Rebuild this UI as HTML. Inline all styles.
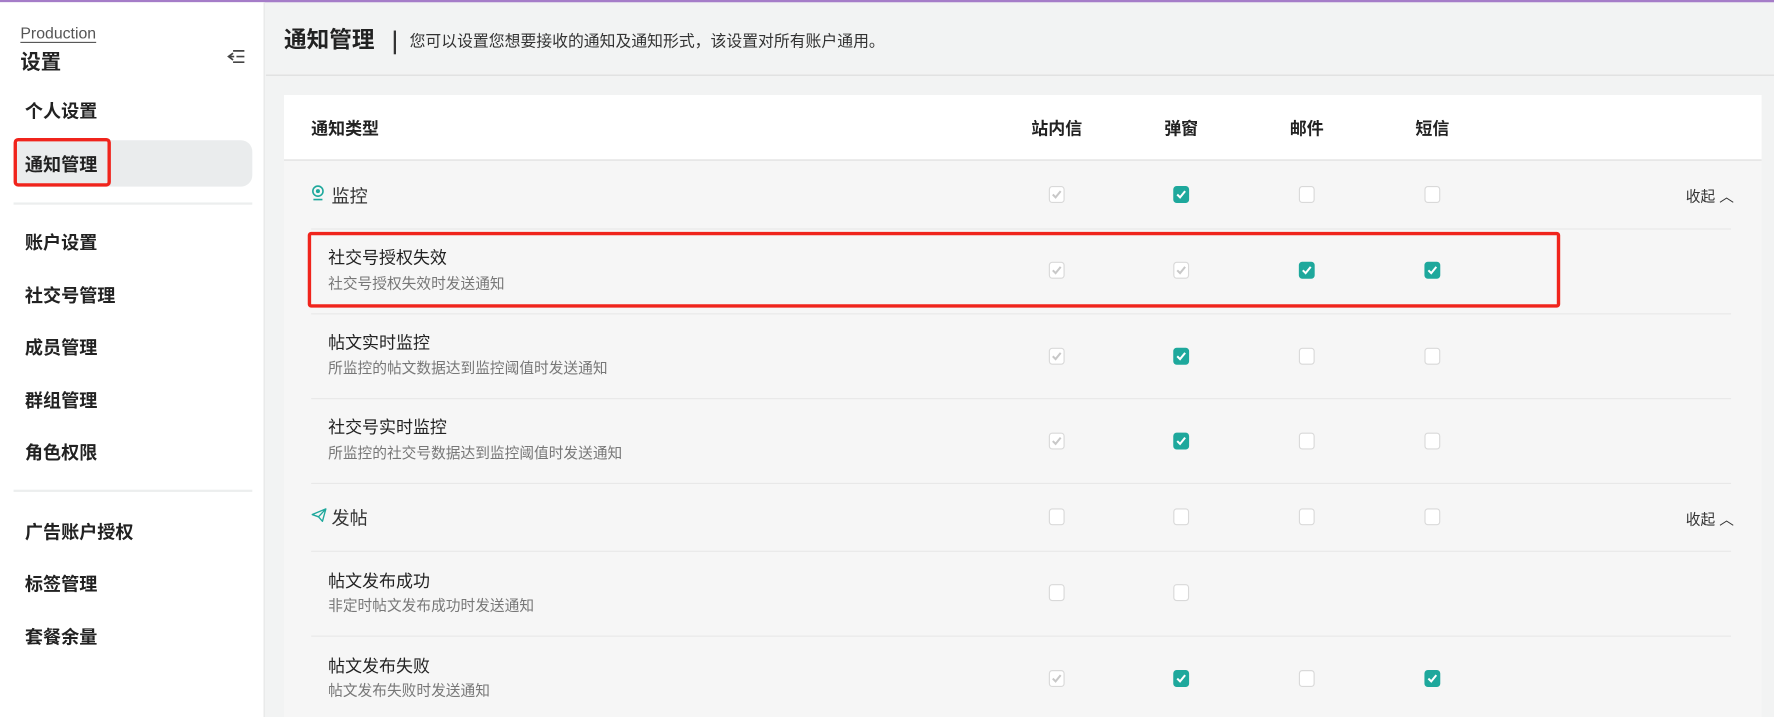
<!DOCTYPE html>
<html><head><meta charset="utf-8"><style>
*{margin:0;padding:0;box-sizing:border-box}
html,body{width:1774px;height:717px;overflow:hidden;background:#f2f3f3}
body{font-family:"Liberation Sans","Noto Sans CJK SC",sans-serif;color:#222}
#w{width:1568px;height:634px;transform:scale(1.1314,1.1309);transform-origin:0 0;position:relative;background:#f2f3f3}
.abs{position:absolute}
#top{left:0;top:0;width:1568px;height:2px;background:#a57cc8}
#side{left:0;top:2px;width:234px;height:632px;background:#fff;border-right:1px solid #e4e4e4}
.mi{position:absolute;left:22px;font-size:16px;font-weight:bold;color:#222;line-height:20px}
.div{position:absolute;left:12px;width:211px;height:2px;background:#eceeee}
#hdr{left:235px;top:2px;width:1333px;height:65px;border-bottom:1px solid #dcdcdc}
#card{left:251px;top:84px;width:1306px;height:550px;background:#f6f6f6}
.col{position:absolute;font-size:15px;font-weight:bold;transform:translateX(-50%);top:106px;line-height:18px}
.cb{position:absolute;width:14px;height:15px;border-radius:3px;background:#fff;border:1px solid #d9d9d9;transform:translate(-50%,-50%)}
.cb.c{background:#1ea89c;border-color:#1ea89c}
.cb svg{position:absolute;left:1px;top:2px}
.t{position:absolute;left:290px;font-size:15px;color:#222;line-height:17px}
.s{position:absolute;left:290px;font-size:13px;color:#777;line-height:15px}
.ln{position:absolute;left:275px;width:1255px;height:1px;background:#e8e8e8}
.sq{position:absolute;left:1490px;font-size:13px;color:#333}
</style></head><body><div id="w">
<div id="top" class="abs"></div>
<div id="side" class="abs"></div>
<div class="abs" style="left:18px;top:21px;font-size:14px;color:#555;border-bottom:1px solid #555;line-height:16px">Production</div>
<div class="abs" style="left:18px;top:44px;font-size:18px;font-weight:bold;line-height:22px">设置</div>
<svg class="abs" style="left:200px;top:43px" width="18" height="14" viewBox="0 0 18 14"><path d="M6 2h10M9 7h7M6 12h10M6 4L2 7l4 3M2 7h5" fill="none" stroke="#444" stroke-width="1.5"/></svg>
<div class="mi" style="top:90px">个人设置</div>
<div class="abs" style="left:12px;top:124px;width:211px;height:41px;background:#eaeced;border-radius:10px"></div>
<div class="abs" style="left:12px;top:122px;width:86px;height:43px;border:3px solid #f0241c;border-radius:4px"></div>
<div class="mi" style="top:137px">通知管理</div>
<div class="div" style="top:179px"></div>
<div class="mi" style="top:206px">账户设置</div>
<div class="mi" style="top:253px">社交号管理</div>
<div class="mi" style="top:299px">成员管理</div>
<div class="mi" style="top:346px">群组管理</div>
<div class="mi" style="top:392px">角色权限</div>
<div class="div" style="top:433px"></div>
<div class="mi" style="top:462px">广告账户授权</div>
<div class="mi" style="top:508px">标签管理</div>
<div class="mi" style="top:555px">套餐余量</div>

<div id="hdr" class="abs"></div>
<div class="abs" style="left:251px;top:24px;font-size:20px;font-weight:bold;line-height:24px">通知管理</div>
<div class="abs" style="left:348px;top:27px;width:2px;height:21px;background:#333"></div>
<div class="abs" style="left:362px;top:27px;font-size:14px;color:#333;line-height:18px">您可以设置您想要接收的通知及通知形式，该设置对所有账户通用。</div>

<div id="card" class="abs"></div>
<div class="abs" style="left:251px;top:84px;width:1306px;height:58px;background:#fff;border-bottom:1px solid #dcdcdc"></div>
<div class="abs" style="left:275px;top:103px;font-size:15px;font-weight:bold">通知类型</div>
<div class="col" style="left:934px">站内信</div>
<div class="col" style="left:1044px">弹窗</div>
<div class="col" style="left:1155px">邮件</div>
<div class="col" style="left:1266px">短信</div>

<svg class="abs" style="left:275px;top:163px" width="12" height="15" viewBox="0 0 12 15"><circle cx="6" cy="6" r="4.5" fill="none" stroke="#1ea89c" stroke-width="1.4"/><circle cx="6" cy="6" r="1.8" fill="#1ea89c"/><path d="M2 13.5h8" stroke="#1ea89c" stroke-width="1.4"/></svg>
<div class="abs" style="left:293px;top:160px;font-size:16px;color:#333">监控</div>
<div class="sq" style="top:163px">收起 ︿</div>
<div class="ln" style="top:202px"></div>
<div class="t" style="top:220px">社交号授权失效</div><div class="s" style="top:243px">社交号授权失效时发送通知</div>
<div class="ln" style="top:277px"></div>
<div class="t" style="top:295px">帖文实时监控</div><div class="s" style="top:318px">所监控的帖文数据达到监控阈值时发送通知</div>
<div class="ln" style="top:352px"></div>
<div class="t" style="top:370px">社交号实时监控</div><div class="s" style="top:393px">所监控的社交号数据达到监控阈值时发送通知</div>
<div class="ln" style="top:427px"></div>
<svg class="abs" style="left:275px;top:449px" width="14" height="13" viewBox="0 0 14 13"><path d="M1 6L13 1 10 12 6.5 8 1 6zM6.5 8L13 1" fill="none" stroke="#1ea89c" stroke-width="1.2" stroke-linejoin="round"/></svg>
<div class="abs" style="left:293px;top:445px;font-size:16px;color:#333">发帖</div>
<div class="sq" style="top:449px">收起 ︿</div>
<div class="ln" style="top:487px"></div>
<div class="t" style="top:506px">帖文发布成功</div><div class="s" style="top:528px">非定时帖文发布成功时发送通知</div>
<div class="ln" style="top:562px"></div>
<div class="t" style="top:581px">帖文发布失败</div><div class="s" style="top:603px">帖文发布失败时发送通知</div>

<div class="abs" style="left:272px;top:205px;width:1107px;height:67px;border:3px solid #f0241c;border-radius:3px"></div>

<div id="cbs"></div>
<script>
var rows=[[172,"dcnn"],[239,"ddcc"],[315,"dcnn"],[390,"dcnn"],[457,"nnnn"],[524,"nn"],[600,"dcnc"]];
var xs=[934,1044,1155,1266],h="";
rows.forEach(function(r){for(var i=0;i<r[1].length;i++){var s=r[1][i];
var chk=s=="n"?"":'<svg width="10" height="9" viewBox="0 0 10 9"><path d="M1.5 4.5l2.5 2.5 4.5-5.5" fill="none" stroke="'+(s=="c"?"#fff":"#c8c8c8")+'" stroke-width="1.8"/></svg>';
h+='<div class="cb'+(s=="c"?" c":"")+'" style="left:'+xs[i]+'px;top:'+r[0]+'px">'+chk+'</div>';}});
document.getElementById("cbs").innerHTML=h;
</script>
</div></body></html>
